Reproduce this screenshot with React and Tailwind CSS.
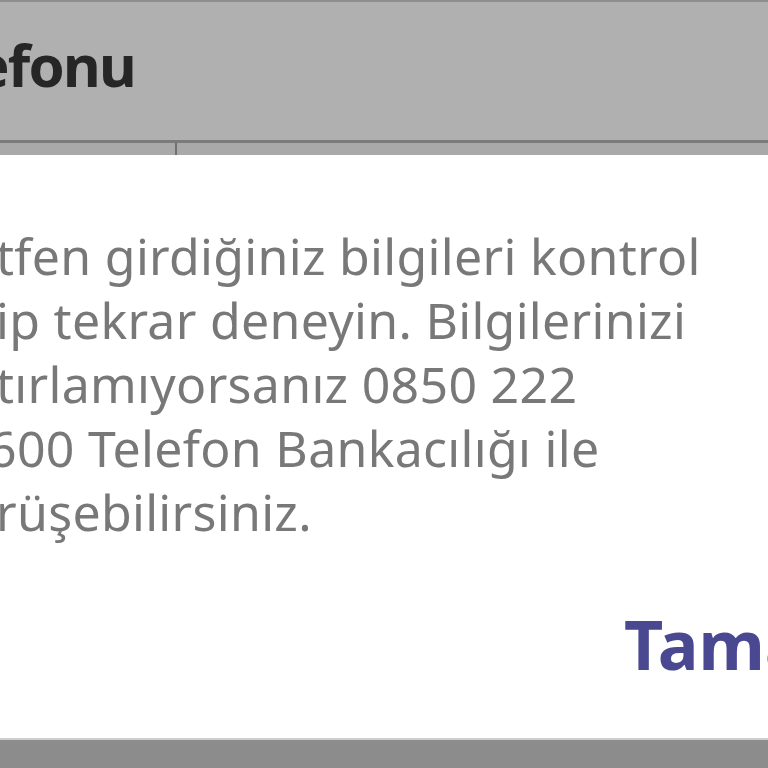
import React from 'react';

const lines = [
  'tfen girdiğiniz bilgileri kontrol',
  'ip tekrar deneyin. Bilgilerinizi',
  'tırlamıyorsanız 0850 222',
  '600 Telefon Bankacılığı ile',
  'rüşebilirsiniz.',
];

const App = () => {
  return (
    <div className="w-[768px] h-[768px] overflow-hidden flex flex-col bg-white font-['Noto_Sans',sans-serif]">
      {/* header bar */}
      <div className="h-[140px] shrink-0 bg-[#b0b0b0] border-t-2 border-[#8e8e8e] pt-[34px]">
        <div className="w-[135px] flex justify-end whitespace-nowrap">
          <span className="text-[58px] font-bold text-[#262626] leading-none tracking-[-0.03em]">Telefonu</span>
        </div>
      </div>
      {/* tab strip under the header */}
      <div className="h-[15px] shrink-0 bg-[#a9a9a9] border-t-[3px] border-[#7b7b7b] flex">
        <div className="ml-[175px] w-[2px] h-full bg-[#6f6f6f]" />
      </div>

      {/* dialog body */}
      <div className="flex-1 flex flex-col pt-[69px]">
        <div className="text-[50px] leading-[64px] tracking-[0.3px] text-[#787878] whitespace-nowrap -ml-[4px]">
          {lines.map((line, i) => (
            <div key={i} className={i === 3 ? '-ml-[8px]' : ''}>{line}</div>
          ))}
        </div>
        <div className="mt-[66px] pl-[624px] whitespace-nowrap">
          <span className="text-[68px] leading-none font-bold text-[#4a4890]">Tamam</span>
        </div>
      </div>

      {/* dimmed area below the dialog */}
      <div className="h-[30px] shrink-0 bg-[#8c8c8c] border-t-2 border-[#cfcfcf]" />
    </div>
  );
};

export default App;
